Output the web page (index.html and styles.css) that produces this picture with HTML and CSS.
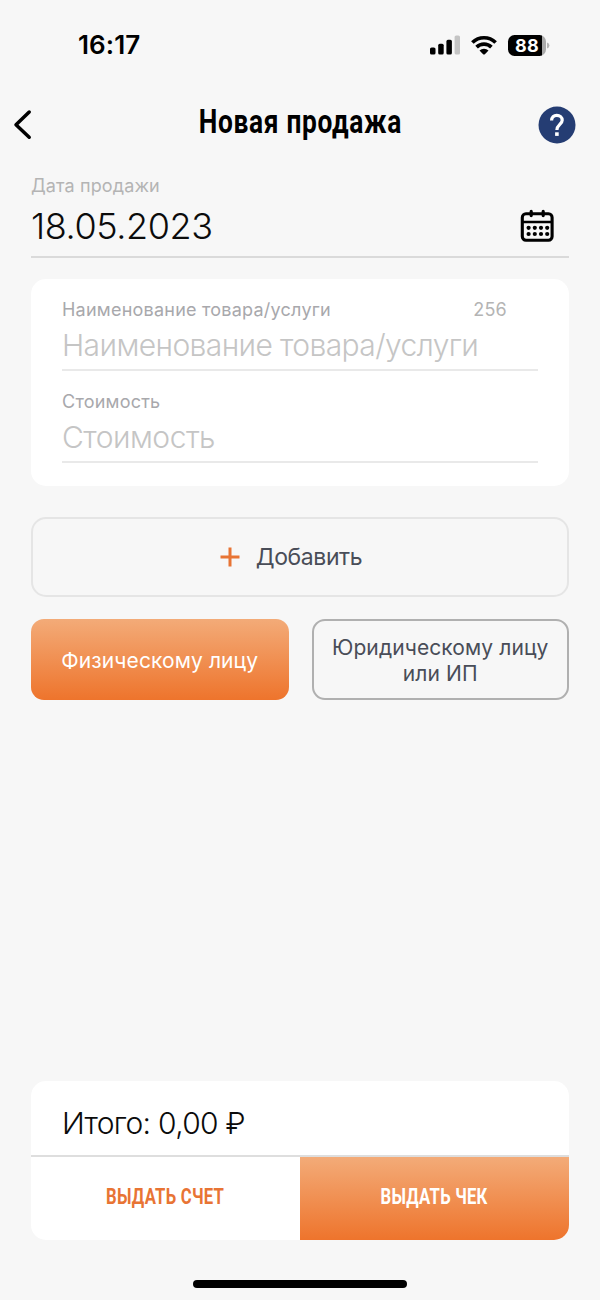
FILE: index.html
```html
<!DOCTYPE html>
<html lang="ru">
<head>
<meta charset="utf-8">
<title>Новая продажа</title>
<link rel="stylesheet" href="styles.css">
</head>
<body>
<div class="screen">
  <div class="status">
    <span class="time">16:17</span>
    <div class="status-icons">
      <svg class="signal" width="30" height="20" viewBox="0 0 30 20"><rect x="0" y="12.5" width="5.5" height="7" rx="1.6"/><rect x="8.2" y="8.7" width="5.5" height="10.8" rx="1.6"/><rect x="16.4" y="4.8" width="5.5" height="14.7" rx="1.6"/><rect x="24.6" y="0.5" width="5.4" height="19" rx="1.6" fill="#c4c4c4"/></svg>
      <svg class="wifi" width="26" height="20" viewBox="0 0 26 20"><g fill="none" stroke="#000" stroke-width="3.7"><path d="M1.4 7.5A16.5 16.5 0 0 1 24.6 7.5"/><path d="M5.6 12.1A10.6 10.6 0 0 1 20.4 12.1"/></g><path d="M8.5 15.6A6.5 6.5 0 0 1 17.5 15.6L13.9 19.2Q13 20 12.1 19.2Z"/></svg>
      <div class="battery"><div class="battery-body">88</div><svg width="3" height="7" viewBox="0 0 3 7"><path d="M0 0.5Q2.4 1.2 2.4 3.5T0 6.5Z" fill="#b4b4b4"/></svg></div>
    </div>
  </div>
  <header class="header">
    <svg class="back" width="20" height="32" viewBox="0 0 20 32"><path d="M17.2 3L4 15.8L17.2 28.2" fill="none" stroke="#000" stroke-width="3.5" stroke-linecap="round" stroke-linejoin="round"/></svg>
    <h1 class="title">Новая продажа</h1>
    <svg class="help" width="38" height="38" viewBox="0 0 38 38"><circle cx="19" cy="19" r="18.5" fill="#253d73"/><path d="M13.6 14.6C13.6 11.2 15.8 9.3 18.8 9.3S24.2 11.2 24.2 14.2C24.2 18.2 18.9 18.8 18.9 24" fill="none" stroke="#fff" stroke-width="3.2"/><rect x="17.1" y="26.3" width="3.6" height="3.6" fill="#fff"/></svg>
  </header>
  <main class="main">
    <section class="date">
      <div class="label label-date">Дата продажи</div>
      <div class="date-row">
        <span class="date-value">18.05.2023</span>
        <svg class="calendar" width="34" height="33" viewBox="0 0 34 33"><rect x="2.3" y="4.8" width="29.8" height="26.4" rx="3.6" fill="none" stroke="#000" stroke-width="3.1"/><path d="M11.2 2.4V6.6M23.2 2.4V6.6" stroke="#000" stroke-width="3.2" stroke-linecap="round"/><path d="M2.3 13H32" stroke="#000" stroke-width="2.5"/><g><circle cx="8.6" cy="18.8" r="2.1"/><circle cx="14.8" cy="18.8" r="2.1"/><circle cx="21" cy="18.8" r="2.1"/><circle cx="27.2" cy="18.8" r="2.1"/><circle cx="8.6" cy="25" r="2.1"/><circle cx="14.8" cy="25" r="2.1"/><circle cx="21" cy="25" r="2.1"/><circle cx="27.2" cy="25" r="2.1"/></g></svg>
      </div>
    </section>
    <section class="card">
      <div class="field">
        <div class="label label-row"><span>Наименование товара/услуги</span><span class="counter">256</span></div>
        <div class="placeholder">Наименование товара/услуги</div>
      </div>
      <div class="field">
        <div class="label">Стоимость</div>
        <div class="placeholder cost">Стоимость</div>
      </div>
    </section>
    <div class="add"><svg width="20" height="20" viewBox="0 0 20 20"><path d="M10 0.5V19.5M0.5 10H19.5" stroke="#e87434" stroke-width="3"/></svg><span>Добавить</span></div>
    <div class="choices">
      <div class="choice selected">Физическому лицу</div>
      <div class="choice">Юридическому лицу<br>или ИП</div>
    </div>
  </main>
  <footer class="footer">
    <div class="total">Итого: 0,00 ₽</div>
    <div class="actions">
      <div class="action"><span>ВЫДАТЬ СЧЕТ</span></div>
      <div class="action primary"><span>ВЫДАТЬ ЧЕК</span></div>
    </div>
  </footer>
  <div class="home"></div>
</div>
</body>
</html>
```
FILE: styles.css
```css
* { box-sizing: border-box; }
body { margin: 0; background: #f7f7f7; font-family: Inter, "Liberation Sans", sans-serif; color: #0b0b0b; }
.screen { width: 600px; height: 1300px; display: flex; flex-direction: column; }
svg { display: block; flex: none; }
.status { height: 90px; padding: 0 50px 0 78px; display: flex; align-items: center; justify-content: space-between; }
.time { margin-bottom: 2px; font-size: 26px; font-weight: 600; letter-spacing: 0.1px; color: #000; }
.status-icons { display: flex; align-items: center; gap: 11px; }
.battery { display: flex; align-items: center; gap: 1px; }
.battery-body { width: 38px; height: 21px; border-radius: 6.5px; background: linear-gradient(90deg, #000 34px, #aaa 34px); color: #fff; font-size: 18px; line-height: 21px; font-weight: 700; text-align: center; letter-spacing: 0.2px; }
.header { height: 70px; padding: 0 24px 0 12px; display: flex; align-items: center; justify-content: space-between; }
.title { margin: 0 0 7px 31px; font-family: Roboto, sans-serif; font-size: 32.5px; line-height: 40px; font-weight: 700; letter-spacing: 0.8px; color: #000; transform: scaleX(0.81); white-space: nowrap; }
.main { padding: 0 31px; flex: 1; }
.date { height: 98px; padding-top: 13px; border-bottom: 2px solid #dadada; }
.label { font-size: 18px; line-height: 24px; height: 24px; letter-spacing: 0.23px; color: #a8a8ac; }
.label-date { line-height: 25px; color: #b4b4b4; letter-spacing: 0.12px; }
.date-row { height: 57px; display: flex; align-items: center; justify-content: space-between; padding-right: 15px; }
.date-value { font-size: 36px; font-weight: 300; letter-spacing: -0.4px; }
.card { height: 207px; margin-top: 21px; padding: 19px 31px 0; border-radius: 15px; background: #fff; }
.field { height: 73px; margin-bottom: 19px; border-bottom: 2px solid #e9e9e9; }
.label-row { display: flex; justify-content: space-between; padding-right: 31px; }
.counter { color: #b4b4b4; }
.placeholder { font-size: 30px; line-height: 46px; font-weight: 300; letter-spacing: -0.6px; color: #c5c5c5; white-space: nowrap; }
.cost { letter-spacing: -0.5px; }
.add { height: 80px; margin-top: 31px; border: 2px solid #e5e5e5; border-radius: 15px; display: flex; align-items: center; justify-content: center; gap: 16px; padding-right: 18px; font-size: 23px; letter-spacing: -0.4px; color: #494d58; }
.choices { display: grid; grid-template-columns: 1fr 1fr; gap: 23px; margin-top: 22px; }
.choice { height: 81px; padding-top: 2px; border: 2px solid #b0b0b0; border-radius: 13px; display: flex; align-items: center; justify-content: center; text-align: center; font-size: 21px; line-height: 26px; letter-spacing: 0.1px; color: #494d58; white-space: nowrap; }
.selected { border: 0; background: linear-gradient(#f3ab78, #ee742c); color: #fff; }
.footer { height: 159px; margin: 0 31px; border-radius: 15px; overflow: hidden; background: #fff; }
.total { height: 76px; padding: 4px 31px 0; border-bottom: 2px solid #dedede; font-size: 30px; line-height: 76px; font-weight: 300; letter-spacing: -0.7px; }
.actions { height: 83px; display: grid; grid-template-columns: 1fr 1fr; }
.action { display: flex; align-items: center; justify-content: center; font-family: Roboto, sans-serif; font-size: 21.5px; font-weight: 700; letter-spacing: 0.3px; color: #e87434; white-space: nowrap; }
.action span { transform: scaleX(0.775); margin-bottom: 4px; }
.primary { background: linear-gradient(#f3ab78, #ee742c); color: #fff; }
.home { width: 214px; height: 8px; margin: 40px auto 12px; border-radius: 4px; background: #000; flex: none; }
```
